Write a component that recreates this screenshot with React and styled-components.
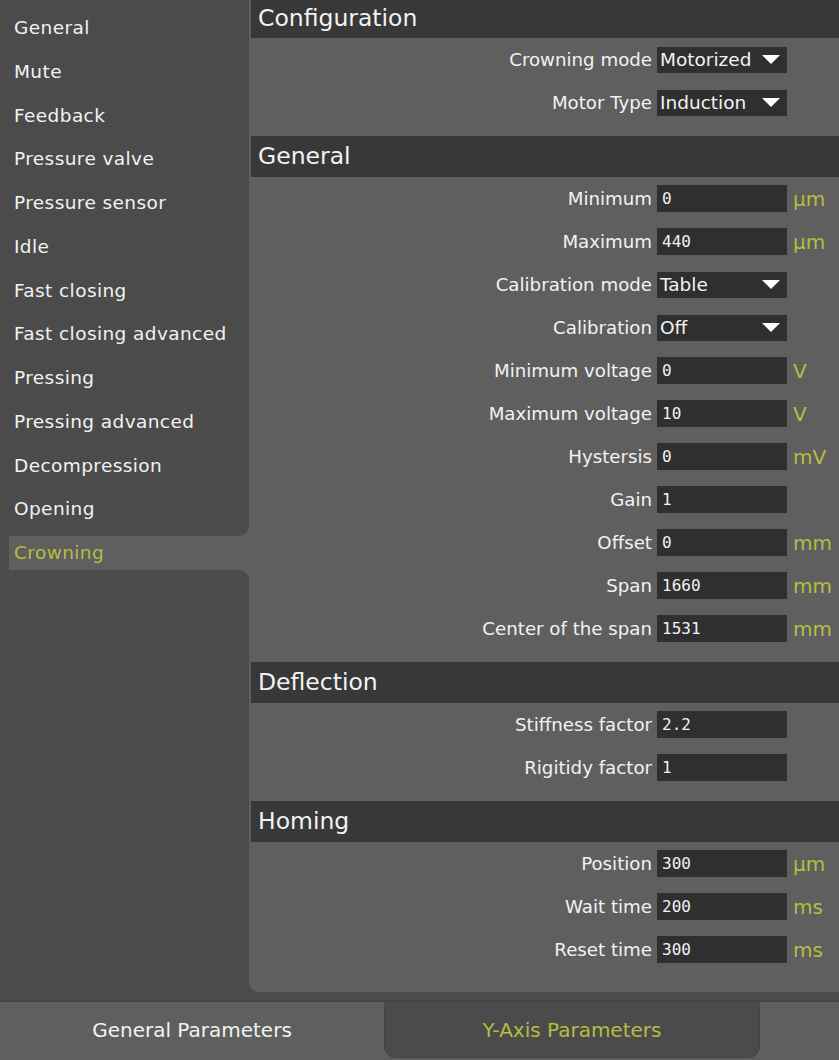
import React from "react"
import styled, { createGlobalStyle } from "styled-components"

const DARK = "#4b4b4b"
const PANEL = "#5f5f5f"
const HEADER = "#383838"
const FIELD = "#2f2f2f"
const ACCENT = "#b6bd3f"
const TEXT = "#f2f2f2"
const FONT = `"DejaVu Sans", "Liberation Sans", sans-serif`

const GlobalStyle = createGlobalStyle`
  html, body {
    margin: 0;
    padding: 0;
    background: ${DARK};
  }
  * {
    box-sizing: border-box;
  }
`

const Screen = styled.div`
  width: 839px;
  height: 1060px;
  display: flex;
  flex-direction: column;
  font-family: ${FONT};
  color: ${TEXT};
  overflow: hidden;
`

const Top = styled.div`
  display: flex;
  background: ${DARK};
  padding-bottom: 8px;
  border-bottom: 2px solid #454545;
`

const Sidebar = styled.nav`
  width: 249px;
  flex-shrink: 0;
  display: flex;
  flex-direction: column;
  background: ${PANEL};
`

const NavBlock = styled.div`
  background: ${DARK};
  padding: ${props => (props.upper ? "6px 0 5px" : "0")};
  border-bottom-right-radius: ${props => (props.upper ? "10px" : "0")};
  border-top-right-radius: ${props => (props.upper ? "0" : "10px")};
  flex: ${props => (props.upper ? "none" : "1")};
`

const NavItem = styled.div`
  height: 43.75px;
  line-height: 43.75px;
  padding-left: 14px;
  margin-right: 12px;
  font-size: 18.5px;
  letter-spacing: 0.4px;
  white-space: nowrap;
  overflow: hidden;
`

const NavSelected = styled.div`
  height: 34px;
  line-height: 34px;
  background: ${PANEL};
  border-left: 9px solid ${DARK};
  padding-left: 5px;
  font-size: 18.5px;
  letter-spacing: 0.4px;
  color: ${ACCENT};
`

const Panel = styled.main`
  flex: 1;
  background: ${PANEL};
  border-bottom-left-radius: 10px;
  padding: 0 0 21px 2px;
`

const Section = styled.section`
  padding-bottom: ${props => (props.last ? "0" : "12px")};
`

const SectionHeader = styled.h2`
  margin: 0;
  height: ${props => (props.first ? "38px" : "41px")};
  line-height: ${props => (props.first ? "36px" : "41px")};
  padding-left: 7px;
  background: ${HEADER};
  font-size: 23.5px;
  font-weight: normal;
`

const Row = styled.div`
  height: 43px;
  display: grid;
  grid-template-columns: 1fr 130px 52px;
  align-items: center;
`

const Label = styled.span`
  text-align: right;
  padding-right: 5px;
  font-size: 18.2px;
  white-space: nowrap;
`

const Field = styled.div`
  height: 27px;
  background: ${FIELD};
  display: flex;
  align-items: center;
  padding-left: 5px;
  font-family: "DejaVu Sans Mono", "Liberation Mono", monospace;
  font-size: 16px;
`

const Select = styled(Field)`
  height: 26px;
  padding-left: 3px;
  padding-right: 7px;
  justify-content: space-between;
  font-family: ${FONT};
  font-size: 18.5px;
`

const Caret = styled.span`
  width: 0;
  height: 0;
  border-left: 9px solid transparent;
  border-right: 9px solid transparent;
  border-top: 9px solid #ffffff;
`

const Unit = styled.span`
  padding-left: 6px;
  font-size: 20px;
  color: ${ACCENT};
`

const Tabs = styled.div`
  height: 58px;
  display: flex;
  background: ${PANEL};
`

const Tab = styled.div`
  width: ${props => (props.active ? "376px" : "384px")};
  height: ${props => (props.active ? "56px" : "58px")};
  display: flex;
  align-items: center;
  justify-content: center;
  padding-bottom: ${props => (props.active ? "0" : "2px")};
  font-size: 20px;
  color: ${props => (props.active ? ACCENT : TEXT)};
  background: ${props => (props.active ? DARK : PANEL)};
  border: ${props => (props.active ? "1px solid #454545" : "none")};
  border-top: none;
  border-radius: 0 0 12px 12px;
`

const navItems = [
  "General",
  "Mute",
  "Feedback",
  "Pressure valve",
  "Pressure sensor",
  "Idle",
  "Fast closing",
  "Fast closing advanced",
  "Pressing",
  "Pressing advanced",
  "Decompression",
  "Opening",
]

const sections = [
  {
    title: "Configuration",
    rows: [
      { label: "Crowning mode", select: "Motorized" },
      { label: "Motor Type", select: "Induction" },
    ],
  },
  {
    title: "General",
    rows: [
      { label: "Minimum", value: "0", unit: "µm" },
      { label: "Maximum", value: "440", unit: "µm" },
      { label: "Calibration mode", select: "Table" },
      { label: "Calibration", select: "Off" },
      { label: "Minimum voltage", value: "0", unit: "V" },
      { label: "Maximum voltage", value: "10", unit: "V" },
      { label: "Hystersis", value: "0", unit: "mV" },
      { label: "Gain", value: "1" },
      { label: "Offset", value: "0", unit: "mm" },
      { label: "Span", value: "1660", unit: "mm" },
      { label: "Center of the span", value: "1531", unit: "mm" },
    ],
  },
  {
    title: "Deflection",
    rows: [
      { label: "Stiffness factor", value: "2.2" },
      { label: "Rigitidy factor", value: "1" },
    ],
  },
  {
    title: "Homing",
    rows: [
      { label: "Position", value: "300", unit: "µm" },
      { label: "Wait time", value: "200", unit: "ms" },
      { label: "Reset time", value: "300", unit: "ms" },
    ],
  },
]

const App = () => {
  return (
    <Screen>
      <GlobalStyle />
      <Top>
        <Sidebar>
          <NavBlock upper>
            {navItems.map(item => (
              <NavItem key={item}>{item}</NavItem>
            ))}
          </NavBlock>
          <NavSelected>Crowning</NavSelected>
          <NavBlock />
        </Sidebar>
        <Panel>
          {sections.map((section, i) => (
            <Section key={section.title} last={i === sections.length - 1}>
              <SectionHeader first={i === 0}>{section.title}</SectionHeader>
              {section.rows.map(row => (
                <Row key={row.label}>
                  <Label>{row.label}</Label>
                  {row.select ? (
                    <Select>
                      {row.select}
                      <Caret />
                    </Select>
                  ) : (
                    <Field>{row.value}</Field>
                  )}
                  <Unit>{row.unit}</Unit>
                </Row>
              ))}
            </Section>
          ))}
        </Panel>
      </Top>
      <Tabs>
        <Tab>General Parameters</Tab>
        <Tab active>Y-Axis Parameters</Tab>
      </Tabs>
    </Screen>
  )
}

export default App
